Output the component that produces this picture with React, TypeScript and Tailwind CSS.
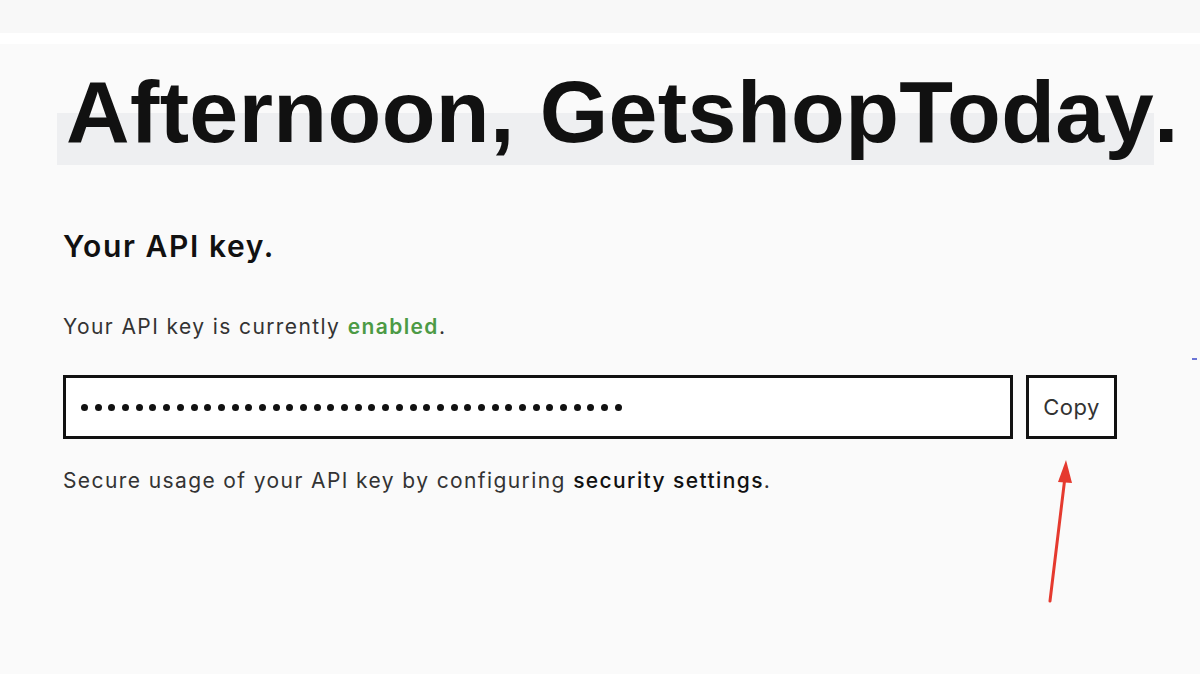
import { useState } from "react";

const KEY_LENGTH = 40;

export default function App() {
  const [copied, setCopied] = useState(false);

  return (
    <div className="relative min-h-screen bg-[#fafafa] font-['Inter',sans-serif] text-[#333]">
      <div className="h-[33px] bg-[#f8f8f8]" />
      <div className="h-[11px] bg-white" />

      <main className="pl-[63px] pr-[60px]">
        <h1 className="ml-[3px] mt-[24px] whitespace-nowrap font-['Liberation_Sans',Arial,sans-serif] text-[88px] font-bold leading-[88px] text-[#111]">
          <span className="-ml-[9px] bg-[linear-gradient(to_bottom,transparent_50%,#eeeff1_50%)] pb-[4px] pl-[9px] tracking-[0.4px]">
            Afternoon, GetshopToday
          </span>
          .
        </h1>

        <h2 className="mt-[72px] text-[30px] font-semibold leading-[36px] tracking-[1.6px] text-[#111]">
          Your API key.
        </h2>

        <p className="mt-[49px] text-[21px] leading-[28px] tracking-[1.4px]">
          Your API key is currently{" "}
          <span className="font-semibold text-[#4c9a45]">enabled</span>.
        </p>

        <div className="mt-[34px] flex h-[64px] gap-[13px]">
          <div
            className="flex w-[950px] items-center gap-[6.7px] border-[3px] border-[#111] bg-white pl-[15px]"
            aria-label="API key"
          >
            {Array.from({ length: KEY_LENGTH }).map((_, i) => (
              <span key={i} className="h-[7px] w-[7px] rounded-full bg-[#111]" />
            ))}
          </div>
          <button
            type="button"
            onClick={() => setCopied(true)}
            className="w-[91px] border-[3px] border-[#111] bg-white text-[22px] tracking-[0.5px] text-[#333]"
          >
            {copied ? "Copied" : "Copy"}
          </button>
        </div>

        <p className="mt-[28px] text-[21px] leading-[28px] tracking-[1.4px]">
          Secure usage of your API key by configuring{" "}
          <span className="font-medium text-[#111]">security settings</span>.
        </p>
      </main>

      {/* annotation arrow */}
      <svg
        className="absolute left-[1040px] top-[455px]"
        width="40"
        height="150"
        viewBox="0 0 40 150"
      >
        <line x1="10" y1="146" x2="25" y2="22" stroke="#e53a2f" strokeWidth="3" strokeLinecap="round" />
        <polygon points="26,5 18,27 32,28" fill="#e53a2f" />
      </svg>
      <div className="absolute left-[1192px] top-[358px] h-[2px] w-[5px] bg-[#6b74d6]" />
    </div>
  );
}
